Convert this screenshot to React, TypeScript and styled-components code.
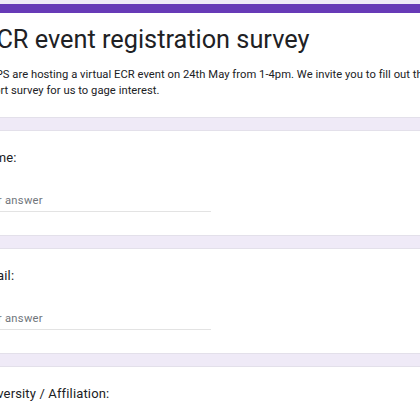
import styled, { createGlobalStyle } from 'styled-components';

const GlobalStyle = createGlobalStyle`
  html, body {
    margin: 0;
    padding: 0;
    background: #efeaf7;
    overflow: hidden;
  }
  body {
    font-family: Roboto, 'Liberation Sans', sans-serif;
    color: #202124;
  }
`;

const Page = styled.div`
  width: 503px;
  margin-left: -38px;
  padding-top: 4px;
  display: flex;
  flex-direction: column;
  gap: 12px;
`;

const Card = styled.div<{ $header?: boolean }>`
  background: #fff;
  border: 1px solid #e3e0ea;
  border-radius: 7px;
  padding: ${(p) => (p.$header ? '11px 19px 18px' : '19px 19px 23px 15px')};
  ${(p) => p.$header && 'border-top: 9px solid #673ab7;'}
`;

const Title = styled.h1`
  margin: 0;
  font-family: Roboto, 'Open Sans', sans-serif;
  font-size: 25.3px;
  line-height: 32px;
  font-weight: 400;
  color: #202124;
`;

const Description = styled.p`
  margin: 11px 0 0;
  font-size: 11.2px;
  line-height: 16px;
  letter-spacing: 0.04px;
  color: #202124;
`;

const Question = styled.div`
  font-size: 13px;
  line-height: 16px;
  letter-spacing: 0.15px;
  color: #202124;
`;

const AnswerField = styled.div`
  margin-top: 25px;
  width: 233px;
  border-bottom: 1px solid #e3e3e3;
  font-size: 11.2px;
  line-height: 20px;
  letter-spacing: 0.3px;
  color: #70757a;
`;

const questions = ['Name:', 'Email:', 'University / Affiliation:'];

export default function App() {
  return (
    <>
      <GlobalStyle />
      <Page>
        <Card $header>
          <Title>ECR event registration survey</Title>
          <Description>
            BSPS are hosting a virtual ECR event on 24th May from 1-4pm. We invite you to fill out
            this short survey for us to gage interest.
          </Description>
        </Card>
        {questions.map((q) => (
          <Card key={q}>
            <Question>{q}</Question>
            <AnswerField>Your answer</AnswerField>
          </Card>
        ))}
      </Page>
    </>
  );
}
